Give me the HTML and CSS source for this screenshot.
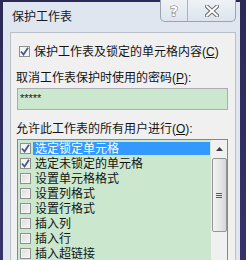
FILE: index.html
```html
<!DOCTYPE html>
<html lang="zh-CN">
<head>
<meta charset="utf-8">
<link rel="stylesheet" href="styles.css">
</head>
<body>
<div class="window">
  <div class="titlebar">
    <span class="title">保护工作表</span>
    <div class="caption-btns">
      <div class="cbtn help"><span class="qmark">?</span></div>
      <div class="cbtn close">
        <svg width="14" height="12" viewBox="0 0 14 12"><path d="M2 1.5 L12 10.5 M12 1.5 L2 10.5" stroke="#6d6d6d" stroke-width="4" stroke-linecap="square"/><path d="M2 1.5 L12 10.5 M12 1.5 L2 10.5" stroke="#ffffff" stroke-width="2" stroke-linecap="square"/></svg>
      </div>
    </div>
  </div>
  <div class="panel">
    <div class="check-row">
      <span class="cb checked"><svg width="9" height="9" viewBox="0 0 9 9"><path d="M1 4.5 L3.5 7.5 L8 0.8" fill="none" stroke="#4a5a86" stroke-width="1.8"/></svg></span>
      <span class="check-text">保护工作表及锁定的单元格内容(<u>C</u>)</span>
    </div>
    <div class="label">取消工作表保护时使用的密码(<u>P</u>):</div>
    <div class="input">*****</div>
    <div class="label">允许此工作表的所有用户进行(<u>O</u>):</div>
    <div class="listbox">
      <div class="items">
        <div class="row"><span class="cb checked"><svg width="9" height="9" viewBox="0 0 9 9"><path d="M1 4.5 L3.5 7.5 L8 0.8" fill="none" stroke="#4a5a86" stroke-width="1.8"/></svg></span><span class="item selected">选定锁定单元格</span></div>
        <div class="row"><span class="cb checked"><svg width="9" height="9" viewBox="0 0 9 9"><path d="M1 4.5 L3.5 7.5 L8 0.8" fill="none" stroke="#4a5a86" stroke-width="1.8"/></svg></span><span class="item">选定未锁定的单元格</span></div>
        <div class="row"><span class="cb"></span><span class="item">设置单元格格式</span></div>
        <div class="row"><span class="cb"></span><span class="item">设置列格式</span></div>
        <div class="row"><span class="cb"></span><span class="item">设置行格式</span></div>
        <div class="row"><span class="cb"></span><span class="item">插入列</span></div>
        <div class="row"><span class="cb"></span><span class="item">插入行</span></div>
        <div class="row"><span class="cb"></span><span class="item">插入超链接</span></div>
      </div>
      <div class="scrollbar">
        <div class="sb-up"><svg width="7" height="4" viewBox="0 0 7 4"><path d="M0 4 L3.5 0 L7 4 Z" fill="#3c3c3c"/></svg></div>
        <div class="sb-thumb"><span class="grip"></span><span class="grip"></span><span class="grip"></span></div>
      </div>
    </div>
  </div>
</div>
</body>
</html>
```

FILE: styles.css
```css
html, body {
  margin: 0;
  height: 260px;
  overflow: hidden;
}
body {
  box-sizing: border-box;
  background: linear-gradient(180deg, #2b2a55, #35336a);
  padding: 2px 6px 0 3px;
  font-family: "Liberation Sans", "Noto Sans CJK SC", sans-serif;
  font-size: 12px;
  color: #141414;
}
.window {
  background: #dfe6ef;
  height: 258px;
  display: flex;
  flex-direction: column;
}
.titlebar {
  height: 30px;
  flex: none;
  display: flex;
  justify-content: space-between;
  align-items: flex-start;
}
.title {
  padding-left: 9px;
  line-height: 30px;
  font-size: 12px;
  color: #1a1a1a;
}
.caption-btns {
  display: flex;
  margin-top: -2px;
  margin-right: 4px;
  height: 22px;
  border: 1px solid #98a2b0;
  border-top: none;
  border-radius: 0 0 5px 5px;
  background: linear-gradient(180deg, #eef2f7, #dde4ed);
  box-sizing: border-box;
}
.cbtn {
  display: flex;
  align-items: center;
  justify-content: center;
}
.help {
  width: 26px;
  border-right: 1px solid #a9b2be;
}
.close {
  width: 47px;
}
.qmark {
  font-family: "DejaVu Sans", sans-serif;
  font-weight: bold;
  font-size: 14px;
  color: #fff;
  -webkit-text-stroke: 1px #6d6d6d;
  paint-order: stroke fill;
  line-height: 14px;
}
.panel {
  flex: 1;
  margin: 0 4px 0 7px;
  background: #f0f0f0;
  border: 1px solid #b9c0ca;
  border-bottom: none;
  box-sizing: border-box;
  padding-top: 10px;
  display: flex;
  flex-direction: column;
  min-height: 0;
}
.check-row {
  display: flex;
  align-items: center;
  height: 16px;
  padding-left: 8px;
}
.check-text {
  margin-left: 4px;
  line-height: 16px;
  padding-top: 1px;
}
.cb {
  width: 11px;
  height: 11px;
  flex: none;
  box-sizing: border-box;
  border: 1px solid #8e8f8f;
  background: linear-gradient(135deg, #dcdcdc, #f6f6f6);
  box-shadow: inset 0 0 0 1px #f4f4f4;
  display: flex;
  align-items: center;
  justify-content: center;
}
.cb.checked {
  background: #f4f4f4;
}
.label {
  margin-top: 11px;
  padding-left: 5px;
  line-height: 16px;
  margin-bottom: -1px;
}
.input {
  margin: 3px 7px 0 6px;
  height: 22px;
  flex: none;
  box-sizing: border-box;
  border: 1px solid #abadb3;
  background: #cbe8cf;
  padding-left: 2px;
  line-height: 12px;
  font-size: 11px;
  padding-top: 3px;
}
.listbox {
  margin: 3px 7px 0 6px;
  flex: 1;
  min-height: 0;
  border: 1px solid #828790;
  border-bottom: none;
  display: flex;
  background: #cbe8cf;
  overflow: hidden;
}
.items {
  flex: 1;
  padding-top: 1px;
}
.row {
  height: 15px;
  display: flex;
  align-items: center;
  padding-left: 2px;
}
.item {
  flex: 1;
  margin-left: 2px;
  margin-right: 1px;
  padding-left: 2px;
  height: 15px;
  line-height: 16px;
}
.item.selected {
  background: linear-gradient(#3399ff, #3399ff) 0 1px / 100% 13px no-repeat;
  color: #fff;
}
.scrollbar {
  width: 16px;
  background: #f0f0f0;
  display: flex;
  flex-direction: column;
  align-items: center;
}
.sb-up {
  height: 17px;
  width: 16px;
  display: flex;
  align-items: center;
  justify-content: center;
}
.sb-thumb {
  margin-top: 1px;
  width: 15px;
  height: 74px;
  box-sizing: border-box;
  border: 1px solid #959595;
  border-radius: 2px;
  background: linear-gradient(90deg, #f3f3f3, #e4e4e4 60%, #d6d6d6);
  display: flex;
  flex-direction: column;
  align-items: center;
  justify-content: center;
  gap: 1px;
}
.grip {
  width: 6px;
  height: 1px;
  background: #5a5a5a;
}
```
